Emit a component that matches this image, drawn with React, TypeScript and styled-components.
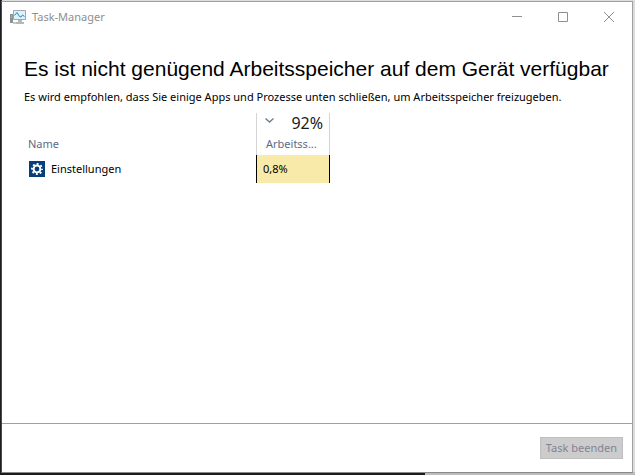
import React from "react";
import styled, { createGlobalStyle } from "styled-components";

const GlobalStyle = createGlobalStyle`
  *, *::before, *::after { box-sizing: border-box; }
  html, body, #root { height: 100%; }
  body {
    margin: 0;
    font-family: "Noto Sans", "Open Sans", sans-serif;
    font-size: 11px;
    line-height: 16px;
    color: #000;
  }
  h1, p { margin: 0; }
`;

const Desktop = styled.div`
  display: grid;
  height: 100%;
  padding: 1px 2px 2px 1px;
  background:
    linear-gradient(90deg, #1b1b1d 67%, #bcbcbc 67%) bottom / 100% 3px no-repeat,
    linear-gradient(#1f1f22, #1f1f22) left / 2px 100% no-repeat,
    #dcdcdc;
`;

const Window = styled.main`
  display: flex;
  flex-direction: column;
  min-width: 0;
  background: #fff;
  border: 1px solid #a0a0a0;
  border-left-color: #4a4a4c;
  border-bottom-color: #88888a;
`;

const TitleBar = styled.header`
  display: flex;
  align-items: center;
  height: 30px;
  padding-left: 8px;
  color: #8f8f8f;
`;

const Title = styled.span`
  flex: 1;
  padding-left: 6px;
`;

const CaptionButton = styled.button`
  display: grid;
  place-items: center;
  width: 46px;
  height: 30px;
  padding: 0;
  border: 0;
  background: none;
  color: #8f8f8f;
`;

const Content = styled.section`
  flex: 1;
  padding: 25px 22px 0;
`;

const Heading = styled.h1`
  font: 400 21px/24px "Liberation Sans", Arial, sans-serif;
  white-space: nowrap;
`;

const Hint = styled.p`
  margin-top: 8px;
  white-space: nowrap;
`;

const ProcessTable = styled.table`
  margin-top: 8px;
  border-collapse: separate;
  border-spacing: 0;
  table-layout: fixed;
  width: 306px;
`;

const NameHeader = styled.th`
  padding: 0 4px 3px;
  font-weight: 400;
  text-align: left;
  vertical-align: bottom;
  color: #5a6b85;
`;

const UsageHeader = styled.th`
  width: 74px;
  height: 42px;
  padding: 0;
  border: solid #d4d4d4;
  border-width: 0 1px;
  font-weight: 400;
  text-align: left;
  color: #5a6b85;
`;

const SortButton = styled.button`
  display: flex;
  flex-direction: column;
  align-items: flex-start;
  width: 100%;
  padding: 0 6px 3px 8px;
  border: 0;
  background: none;
  font: inherit;
  text-align: left;
  color: inherit;
`;

const UsageTotal = styled.span`
  display: flex;
  justify-content: space-between;
  width: 100%;
  height: 23px;
  font-size: 16px;
  line-height: 20px;
  color: #1a1a1a;
`;

const UsageLabel = styled.span`
  padding-left: 1px;
`;

const NameCell = styled.td`
  height: 28px;
  padding: 0 5px;
`;

const AppLabel = styled.span`
  display: flex;
  align-items: center;
  gap: 6px;
`;

const UsageCell = styled.td`
  padding: 0 6px;
  border: solid #000;
  border-width: 0 1px;
  background: #f8eaa8;
`;

const Footer = styled.footer`
  display: flex;
  justify-content: flex-end;
  padding: 13px 9px;
  border-top: 1px solid #a0a0a0;
`;

const EndTaskButton = styled.button`
  height: 22px;
  padding: 0 5px;
  border: 1px solid #bfbfbf;
  background: #ccc;
  color: #838398;
  font: inherit;
  line-height: 16px;
`;

const TaskManagerIcon = () => (
  <svg width="16" height="16" viewBox="0 0 16 16" aria-hidden="true">
    <path d="M0 5h3v9H0z" fill="#8b9490" />
    <path d="M1 6h1v3H1z" fill="#5de04a" />
    <path d="M3.5 1.5h12v9h-12z" fill="#d9f2fc" stroke="#a3a7aa" />
    <path d="M4.5 6.5l2.5-3 2.5 4 1.5.5 1.5-2 2 1.5" fill="none" stroke="#2f86b5" />
    <path d="M8 11h4v2h2v2H6v-2h2z" fill="#b5b7b8" />
    <path d="M3 14h3" stroke="#8b9490" />
  </svg>
);

const GearIcon = () => (
  <svg width="16" height="16" viewBox="0 0 16 16" aria-hidden="true">
    <path d="M0 0h16v16H0z" fill="#063f7c" />
    <circle cx="8" cy="8" r="3.4" fill="none" stroke="#fff" strokeWidth="2" />
    <circle cx="8" cy="8" r="5" fill="none" stroke="#fff" strokeWidth="2" strokeDasharray="1.9 2.027" strokeDashoffset="0.95" />
  </svg>
);

export default function App() {
  return (
    <>
      <GlobalStyle />
      <Desktop>
        <Window>
          <TitleBar>
            <TaskManagerIcon />
            <Title>Task-Manager</Title>
            <CaptionButton aria-label="Minimieren">
              <svg width="10" height="10" viewBox="0 0 10 10"><path d="M0 4.5h10" stroke="currentColor" /></svg>
            </CaptionButton>
            <CaptionButton aria-label="Maximieren">
              <svg width="10" height="10" viewBox="0 0 10 10"><path d="M.5 .5h9v9h-9z" fill="none" stroke="currentColor" /></svg>
            </CaptionButton>
            <CaptionButton aria-label="Schließen">
              <svg width="10" height="10" viewBox="0 0 10 10"><path d="M0 0l10 10M10 0L0 10" stroke="currentColor" /></svg>
            </CaptionButton>
          </TitleBar>
          <Content>
            <Heading>Es ist nicht genügend Arbeitsspeicher auf dem Gerät verfügbar</Heading>
            <Hint>Es wird empfohlen, dass Sie einige Apps und Prozesse unten schließen, um Arbeitsspeicher freizugeben.</Hint>
            <ProcessTable>
              <thead>
                <tr>
                  <NameHeader scope="col">Name</NameHeader>
                  <UsageHeader scope="col" aria-sort="descending">
                    <SortButton>
                      <UsageTotal>
                        <svg width="9" height="14" viewBox="0 0 9 14" aria-hidden="true">
                          <path d="M.5 5.5l4 3.5 4-3.5" fill="none" stroke="#71808f" strokeWidth="1.5" />
                        </svg>
                        92%
                      </UsageTotal>
                      <UsageLabel>Arbeitss...</UsageLabel>
                    </SortButton>
                  </UsageHeader>
                </tr>
              </thead>
              <tbody>
                <tr>
                  <NameCell>
                    <AppLabel><GearIcon />Einstellungen</AppLabel>
                  </NameCell>
                  <UsageCell>0,8%</UsageCell>
                </tr>
              </tbody>
            </ProcessTable>
          </Content>
          <Footer>
            <EndTaskButton disabled>Task beenden</EndTaskButton>
          </Footer>
        </Window>
      </Desktop>
    </>
  );
}
